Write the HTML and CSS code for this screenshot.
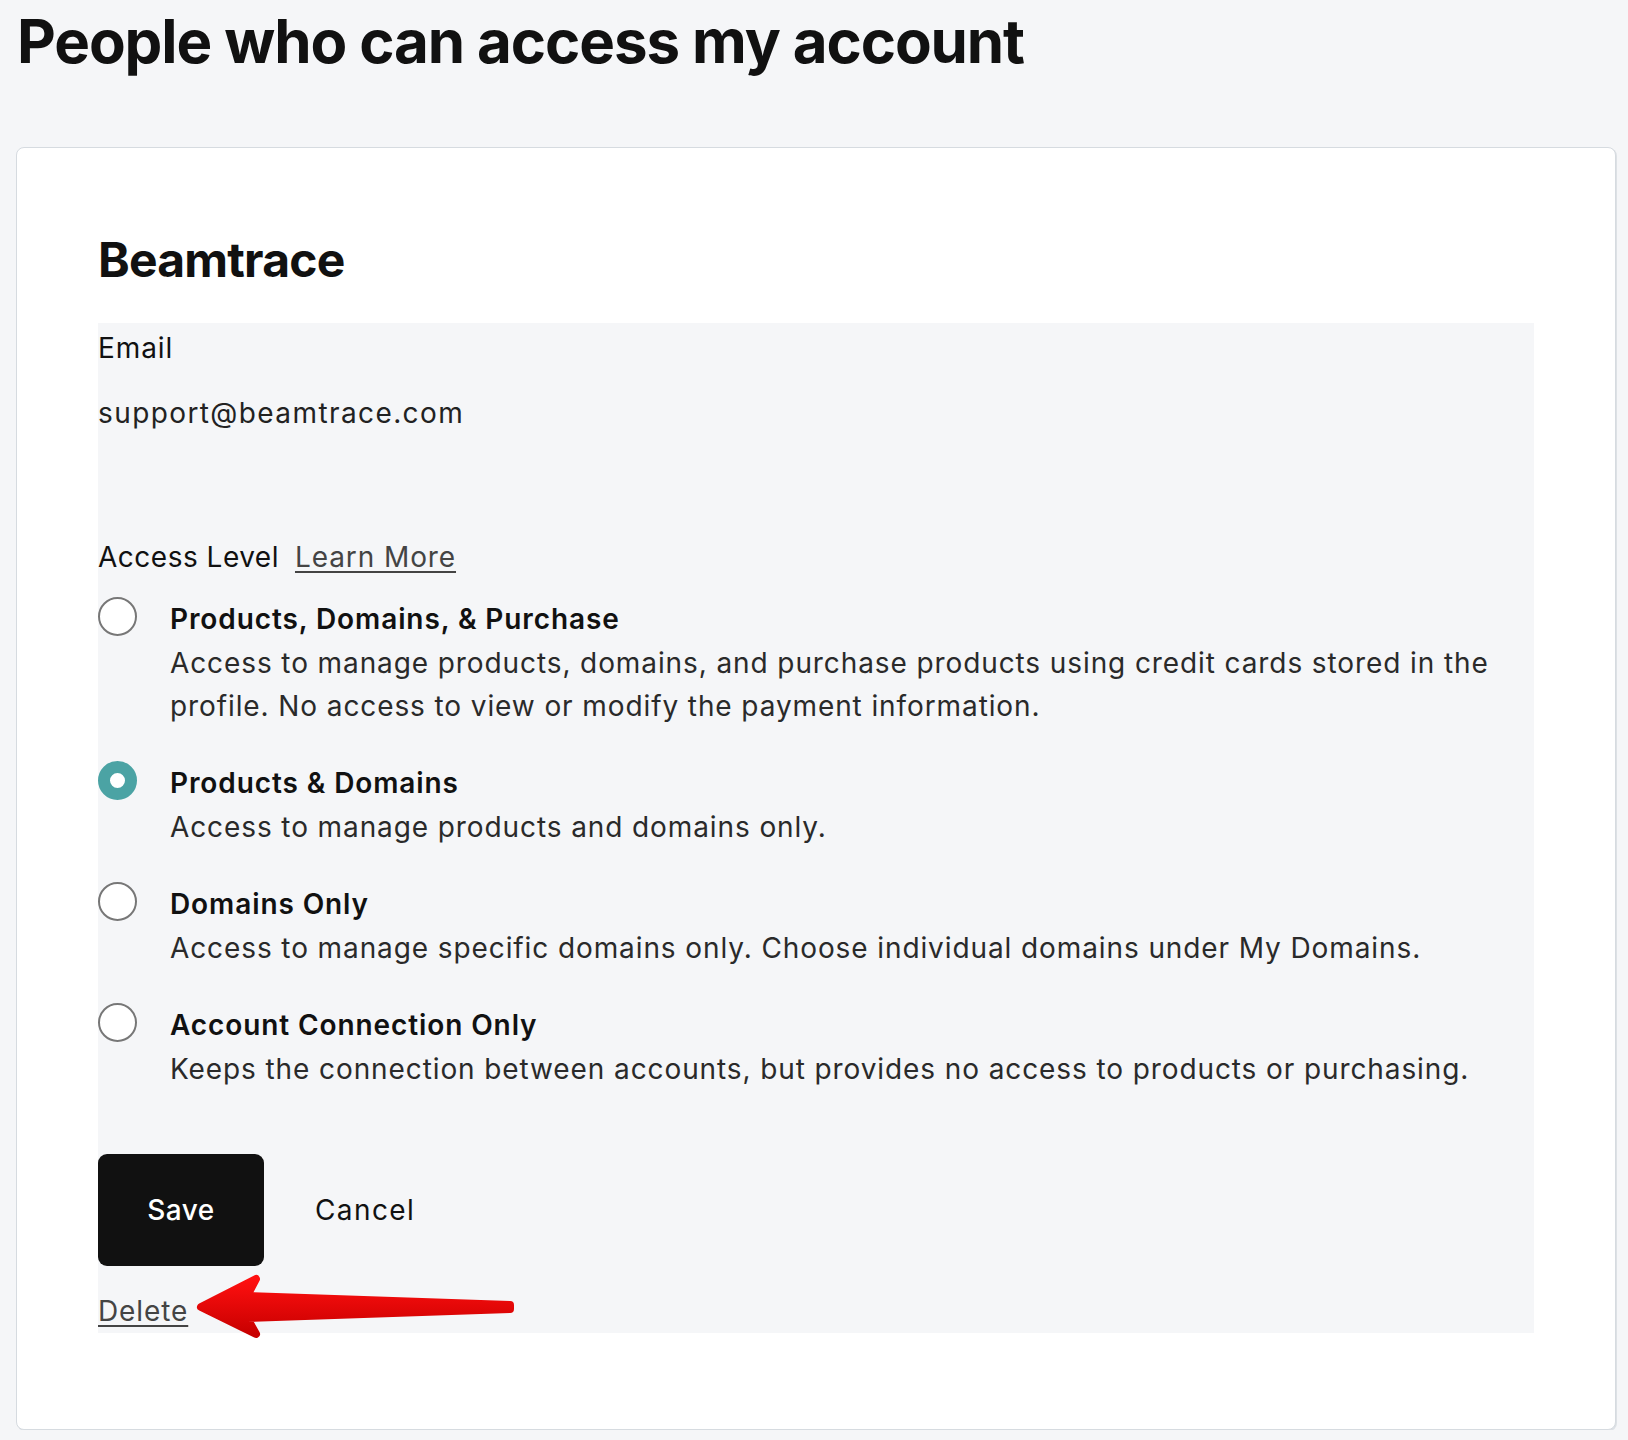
FILE: index.html
```html
<!DOCTYPE html>
<html lang="en">
<head>
<meta charset="utf-8">
<title>People who can access my account</title>
<link rel="stylesheet" href="styles.css">
</head>
<body>
<main class="page">
  <h1 class="page-title">People who can access my account</h1>
  <section class="card">
    <h2 class="card-title">Beamtrace</h2>
    <div class="details">
      <div class="field-label">Email</div>
      <div class="field-value">support@beamtrace.com</div>

      <div class="access-head">
        <span class="access-label">Access Level</span>
        <a class="link" href="#">Learn More</a>
      </div>

      <div class="options">
        <label class="option">
          <span class="radio"></span>
          <span class="option-text">
            <span class="option-title">Products, Domains, &amp; Purchase</span>
            <span class="option-desc">Access to manage products, domains, and purchase products using credit cards stored in the profile. No access to view or modify the payment information.</span>
          </span>
        </label>
        <label class="option">
          <span class="radio checked"></span>
          <span class="option-text">
            <span class="option-title">Products &amp; Domains</span>
            <span class="option-desc">Access to manage products and domains only.</span>
          </span>
        </label>
        <label class="option">
          <span class="radio"></span>
          <span class="option-text">
            <span class="option-title">Domains Only</span>
            <span class="option-desc">Access to manage specific domains only. Choose individual domains under My Domains.</span>
          </span>
        </label>
        <label class="option">
          <span class="radio"></span>
          <span class="option-text">
            <span class="option-title">Account Connection Only</span>
            <span class="option-desc">Keeps the connection between accounts, but provides no access to products or purchasing.</span>
          </span>
        </label>
      </div>

      <div class="actions">
        <button class="btn-save" type="button">Save</button>
        <button class="btn-cancel" type="button">Cancel</button>
      </div>
      <a class="link delete" href="#">Delete</a>

      <svg class="arrow" width="325" height="71" viewBox="0 0 325 71" aria-hidden="true">
        <defs>
          <linearGradient id="arrowGrad" x1="0" y1="0" x2="0" y2="1">
            <stop offset="0" stop-color="#ff1010"/>
            <stop offset="1" stop-color="#c80000"/>
          </linearGradient>
        </defs>
        <path d="M11,36 L66,8 L57,25 L320,34 L320,38 L57,47 L66,63 Z" fill="url(#arrowGrad)" stroke="url(#arrowGrad)" stroke-width="8" stroke-linejoin="round"/>
      </svg>
    </div>
  </section>
</main>
</body>
</html>
```

FILE: styles.css
```css
* {
  box-sizing: border-box;
}

html, body {
  margin: 0;
  padding: 0;
  background: #f5f6f8;
}

body {
  font-family: "Inter", "Liberation Sans", sans-serif;
  color: #111111;
}

.page {
  padding: 0 12px 0 16px;
  width: 1628px;
}

.page-title {
  margin: 5px 0 70px 1px;
  font-size: 60px;
  line-height: 72px;
  font-weight: 700;
  letter-spacing: -1.1px;
  color: #111111;
}

.card {
  background: #ffffff;
  border: 1px solid #d6dbe0;
  border-radius: 8px;
  box-shadow: 1px 1px 0 #dde1e5;
  padding: 83px 81px 96px 81px;
  height: 1283px;
}

.card-title {
  margin: 0 0 34px 0;
  font-size: 48px;
  line-height: 58px;
  font-weight: 700;
  letter-spacing: -0.8px;
}

.details {
  position: relative;
  background: #f5f6f8;
  padding-top: 4px;
  font-size: 28px;
  line-height: 43px;
  letter-spacing: 0.9px;
}

.field-label {
  color: #111111;
}

.field-value {
  margin-top: 22px;
  color: #222222;
  letter-spacing: 1.4px;
}

.access-head {
  margin-top: 101px;
  display: flex;
  gap: 16px;
}

.access-label {
  letter-spacing: 0.5px;
}

.link {
  color: #444444;
  text-decoration: underline;
  text-underline-offset: 4px;
  text-decoration-thickness: 2px;
}

.options {
  margin-top: 18px;
  display: flex;
  flex-direction: column;
  gap: 33px;
}

.option {
  display: grid;
  grid-template-columns: 72px 1fr;
  align-items: start;
}

.radio {
  width: 39px;
  height: 39px;
  border-radius: 50%;
  border: 2px solid #777777;
  background: #ffffff;
  margin-top: 0;
}

.radio.checked {
  border: 12px solid #4ba3a4;
  background: #ffffff;
}

.option-text {
  display: flex;
  flex-direction: column;
}

.option-title {
  font-weight: 600;
  line-height: 45px;
  color: #111111;
}

.option-desc {
  color: #2a2a2a;
  padding-right: 20px;
}

.actions {
  margin-top: 63px;
  display: flex;
  align-items: center;
  gap: 0;
}

.btn-save {
  width: 166px;
  height: 112px;
  background: #111111;
  color: #ffffff;
  border: none;
  border-radius: 9px;
  font: inherit;
  font-size: 28px;
  font-weight: 500;
  letter-spacing: 0.5px;
  padding: 0;
}

.btn-cancel {
  background: transparent;
  border: none;
  font: inherit;
  font-size: 28px;
  letter-spacing: 1.4px;
  color: #111111;
  padding: 0;
  margin-left: 51px;
}

.delete {
  display: inline-block;
  margin-top: 24px;
}

.arrow {
  position: absolute;
  left: 92px;
  top: 948px;
}
```
